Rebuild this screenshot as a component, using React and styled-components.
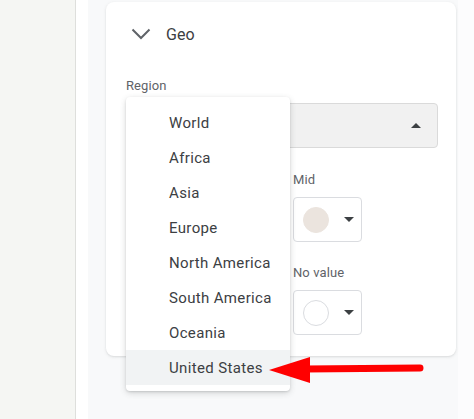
import React from "react";
import styled, { createGlobalStyle } from "styled-components";

const Global = createGlobalStyle`
  html, body { margin: 0; padding: 0; background: #ffffff; }
  body { font-family: Roboto, "Noto Sans", "Liberation Sans", sans-serif; }
  * { box-sizing: border-box; }
`;

const Page = styled.div`
  position: relative;
  display: flex;
  width: 474px;
  height: 419px;
  overflow: hidden;
  background: #ffffff;
`;

const Sidebar = styled.div`
  width: 76px;
  flex: none;
  background: #f5f6f3;
  border-right: 1px solid #dedfdc;
`;

const Gutter = styled.div`
  width: 12px;
  flex: none;
  background: #ffffff;
`;

const Panel = styled.div`
  width: 370px;
  flex: none;
  background: #f8f9fa;
  padding: 2px 2px 0 18px;
`;

const Edge = styled.div`
  flex: 1;
  background: #fcfcfd;
`;

const Card = styled.section`
  position: relative;
  background: #ffffff;
  border-radius: 8px;
  box-shadow: 0 1px 2px rgba(60, 64, 67, 0.12), 0 1px 4px rgba(60, 64, 67, 0.06);
  padding: 0 18px 21px 20px;
  display: flex;
  flex-direction: column;
`;

const Header = styled.div`
  height: 64px;
  display: flex;
  align-items: center;
  gap: 15px;
  padding-left: 5px;
  color: #3c4043;
  font-size: 16px;
  letter-spacing: 0.1px;
`;

const Label = styled.div`
  font-size: 13px;
  line-height: 16px;
  letter-spacing: 0.1px;
  color: #5f6368;
  margin-top: ${(p) => p.$top}px;
`;

const Select = styled.div`
  margin-top: 9px;
  height: 45px;
  background: #f1f1f1;
  border: 1px solid #dadada;
  border-radius: 4px;
  display: flex;
  align-items: center;
  justify-content: flex-end;
  padding-right: 16px;
`;

const Caret = styled.span`
  width: 0;
  height: 0;
  border-left: 5px solid transparent;
  border-right: 5px solid transparent;
  ${(p) =>
    p.$up
      ? "border-bottom: 5px solid #3c4043;"
      : "border-top: 5px solid #3c4043;"}
`;

const Grid = styled.div`
  display: grid;
  grid-template-columns: 167px 167px;
`;

const Field = styled.div`
  display: flex;
  flex-direction: column;
`;

const SwatchButton = styled.div`
  margin-top: 9px;
  width: 69px;
  height: 45px;
  border: 1px solid #dadce0;
  border-radius: 4px;
  display: flex;
  align-items: center;
  padding-left: 9px;
  gap: 15px;
  background: #ffffff;
`;

const Dot = styled.span`
  width: 26px;
  height: 26px;
  border-radius: 50%;
  background: ${(p) => p.$color};
  border: 1px solid ${(p) => (p.$color === "#ffffff" ? "#dadce0" : p.$color)};
`;

const Menu = styled.ul`
  position: absolute;
  left: 20px;
  top: 95px;
  width: 164px;
  margin: 0;
  padding: 8px 0 6px;
  list-style: none;
  background: #ffffff;
  border-radius: 4px;
  box-shadow: 0 2px 6px rgba(60, 64, 67, 0.2), 0 1px 2px rgba(60, 64, 67, 0.15);
`;

const Item = styled.li`
  height: 35px;
  display: flex;
  align-items: center;
  padding-left: 43px;
  font-size: 15px;
  letter-spacing: 0.35px;
  color: #3c4043;
  background: ${(p) => (p.$active ? "#f1f3f4" : "transparent")};
`;

const Pointer = styled.svg`
  position: absolute;
  left: 260px;
  top: 350px;
`;

const Chevron = () => (
  <svg width="20" height="12" viewBox="0 0 20 12">
    <path d="M1.5 1.5 L10 10 L18.5 1.5" fill="none" stroke="#5f6368" strokeWidth="2" />
  </svg>
);

const regions = [
  "World",
  "Africa",
  "Asia",
  "Europe",
  "North America",
  "South America",
  "Oceania",
  "United States",
];

export default function App() {
  return (
    <Page>
      <Global />
      <Sidebar />
      <Gutter />
      <Panel>
        <Card>
          <Header>
            <Chevron />
            <span>Geo</span>
          </Header>
          <Label $top={12}>Region</Label>
          <Select>
            <Caret $up />
          </Select>
          <Grid>
            <Field>
              <Label $top={24}>Min</Label>
              <SwatchButton>
                <Dot $color="#c9d8ea" />
                <Caret />
              </SwatchButton>
            </Field>
            <Field>
              <Label $top={24}>Mid</Label>
              <SwatchButton>
                <Dot $color="#ebe4de" />
                <Caret />
              </SwatchButton>
            </Field>
            <Field>
              <Label $top={23}>Max</Label>
              <SwatchButton>
                <Dot $color="#1a73e8" />
                <Caret />
              </SwatchButton>
            </Field>
            <Field>
              <Label $top={23}>No value</Label>
              <SwatchButton>
                <Dot $color="#ffffff" />
                <Caret />
              </SwatchButton>
            </Field>
          </Grid>
          <Menu>
            {regions.map((r) => (
              <Item key={r} $active={r === "United States"}>
                {r}
              </Item>
            ))}
          </Menu>
        </Card>
      </Panel>
      <Edge />
      <Pointer width="170" height="40" viewBox="260 350 170 40">
        <line x1="305" y1="369" x2="420" y2="368" stroke="#ff0000" strokeWidth="7" strokeLinecap="round" />
        <polygon points="269,370 310,357 310,383" fill="#ff0000" />
      </Pointer>
    </Page>
  );
}
